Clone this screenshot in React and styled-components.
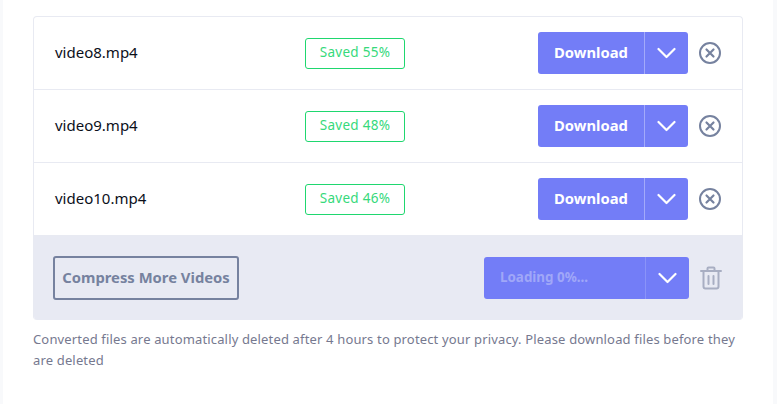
import styled, { createGlobalStyle } from 'styled-components';

const GlobalStyle = createGlobalStyle`
  html, body {
    margin: 0;
    padding: 0;
    background: #f8f9fb;
  }
  body {
    font-family: "Noto Sans", "Liberation Sans", sans-serif;
  }
`;

const Page = styled.main`
  box-sizing: border-box;
  width: 770px;
  height: 404px;
  margin-left: 3px;
  padding: 16px 30px 0;
  background: #fff;
`;

const Card = styled.section`
  border: 1px solid #e8eaf2;
  border-bottom: 0;
  border-radius: 4px;
  overflow: hidden;
`;

const FileRow = styled.div`
  box-sizing: border-box;
  display: flex;
  align-items: center;
  height: 73px;
  padding: 0 20px 1px 20px;
  border-bottom: 1px solid #e8eaf2;
`;

const FileName = styled.span`
  width: 251px;
  padding-left: 1px;
  margin-right: -1px;
  font-size: 15px;
  line-height: 20px;
  color: #0b0f1a;
  transform: translateY(-1px);
`;

const SavedBadge = styled.span`
  box-sizing: border-box;
  display: flex;
  align-items: center;
  justify-content: center;
  width: 100px;
  height: 31px;
  margin-top: 1px;
  padding-bottom: 2px;
  border: 1px solid #1fd76f;
  border-radius: 3px;
  font-size: 13.5px;
  letter-spacing: 0.3px;
  color: #36d97b;
`;

const Actions = styled.div`
  display: flex;
  align-items: center;
  margin-left: auto;
`;

const SplitButton = styled.div`
  display: flex;
  width: ${({ $wide }) => ($wide ? '205px' : '150px')};
  height: 42px;
  border-radius: 3px;
  background: #737df7;
  color: #fff;
`;

const MainPart = styled.span`
  flex: 1;
  display: flex;
  align-items: center;
  padding: 0 0 2px 16px;
  font-weight: 700;
  color: ${({ $muted }) => ($muted ? '#a0a7f8' : '#fff')};
  font-size: ${({ $muted }) => ($muted ? '13.4px' : '14.8px')};
`;

const ArrowPart = styled.span`
  display: flex;
  align-items: center;
  justify-content: center;
  width: 43px;
  border-left: 1px solid ${({ $dim }) => ($dim ? '#8a93f8' : '#a3aafa')};
`;

const IconButton = styled.span`
  display: flex;
  margin-left: ${({ $gap }) => $gap}px;
`;

const Footer = styled.div`
  box-sizing: border-box;
  display: flex;
  align-items: center;
  justify-content: space-between;
  height: 84px;
  padding: 0 20px 0 19px;
  background: #e8eaf3;
`;

const MoreButton = styled.span`
  box-sizing: border-box;
  display: flex;
  align-items: center;
  justify-content: center;
  width: 186px;
  height: 44px;
  padding-bottom: 2px;
  border: 2px solid #76829f;
  border-radius: 3px;
  font-size: 14.8px;
  font-weight: 700;
  color: #76829f;
`;

const Note = styled.p`
  margin: 9px 0 0;
  font-size: 13px;
  letter-spacing: 0.155px;
  line-height: 21px;
  color: #76798f;
`;

const Chevron = () => (
  <svg width="20" height="12" viewBox="0 0 20 12" fill="none">
    <path d="M1.5 2l8 8 8-8" stroke="#fff" strokeWidth="2.2" strokeLinecap="round" strokeLinejoin="round" />
  </svg>
);

const CloseCircle = () => (
  <svg width="24" height="24" viewBox="0 0 24 24" fill="none" stroke="#76829f">
    <circle cx="12" cy="12" r="10" strokeWidth="2" />
    <path d="M8.5 8.5l7 7M15.5 8.5l-7 7" strokeWidth="2.2" strokeLinecap="round" />
  </svg>
);

const Trash = () => (
  <svg width="22" height="24" viewBox="0 0 22 24" fill="none" stroke="#a8aec2" strokeWidth="2">
    <path d="M1 5h20M7.5 5V2.5a1 1 0 0 1 1-1h5a1 1 0 0 1 1 1V5" strokeLinecap="round" />
    <path d="M3.5 5v15.5a2 2 0 0 0 2 2h11a2 2 0 0 0 2-2V5" />
    <path d="M8.5 10v8M13.5 10v8" strokeLinecap="round" />
  </svg>
);

const files = [
  { name: 'video8.mp4', saved: 55 },
  { name: 'video9.mp4', saved: 48 },
  { name: 'video10.mp4', saved: 46 },
];

export default function App() {
  return (
    <>
      <GlobalStyle />
      <Page>
        <Card>
          {files.map(({ name, saved }) => (
            <FileRow key={name}>
              <FileName>{name}</FileName>
              <SavedBadge>Saved {saved}%</SavedBadge>
              <Actions>
                <SplitButton>
                  <MainPart>Download</MainPart>
                  <ArrowPart><Chevron /></ArrowPart>
                </SplitButton>
                <IconButton $gap={10}><CloseCircle /></IconButton>
              </Actions>
            </FileRow>
          ))}
          <Footer>
            <MoreButton>Compress More Videos</MoreButton>
            <Actions>
              <SplitButton $wide>
                <MainPart $muted>Loading 0%...</MainPart>
                <ArrowPart $dim><Chevron /></ArrowPart>
              </SplitButton>
              <IconButton $gap={11}><Trash /></IconButton>
            </Actions>
          </Footer>
        </Card>
        <Note>
          Converted files are automatically deleted after 4 hours to protect your privacy. Please download files before they are deleted
        </Note>
      </Page>
    </>
  );
}
